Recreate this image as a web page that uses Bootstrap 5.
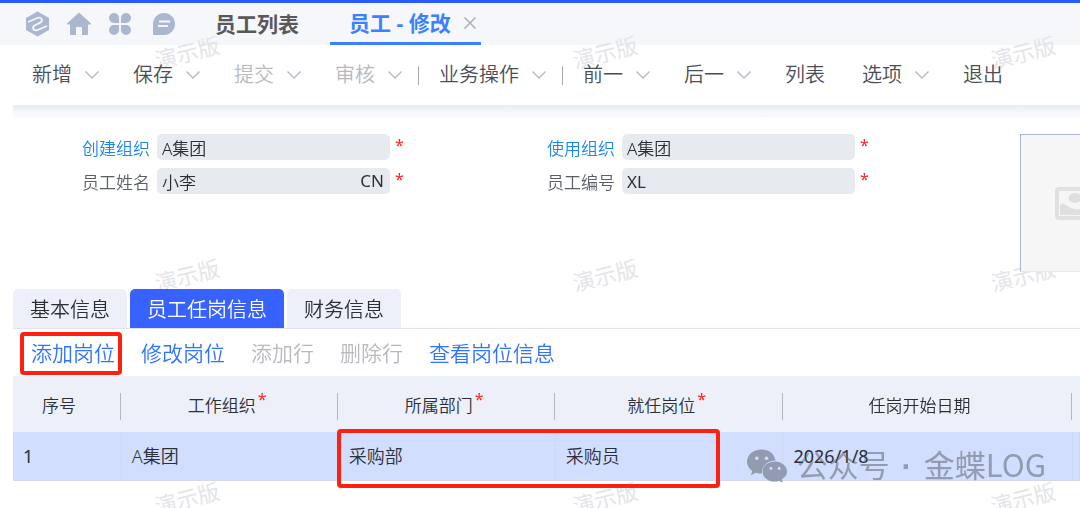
<!DOCTYPE html>
<html lang="zh-CN">
<head>
<meta charset="utf-8">
<meta name="viewport" content="width=device-width, initial-scale=1">
<title>员工 - 修改</title>
<link href="https://cdn.jsdelivr.net/npm/bootstrap@5.3.0/dist/css/bootstrap.min.css" rel="stylesheet">
<style>
  body { font-family: "Noto Sans", "Noto Sans CJK SC", sans-serif; font-weight: 350; color: #2b2f38; background: #fff; }
  .page { min-height: 100vh; }
  button { font-weight: inherit; }
  .layer { position: relative; z-index: 2; }
  .latin { font-weight: 400; }

  .app-bar { border-top: 3px solid #275aff; background: #f5f7fb; height: 45px; padding-left: 25px; }
  .app-icons { gap: 16px; width: 190px; }
  .app-icons button { color: #abb6d0; line-height: 0; }
  .doc-tab { font-size: 21px; line-height: 24px; font-weight: 700; color: #595959; text-decoration: none; }
  .doc-tab.active { color: #3a80ff; }
  .doc-active { border-bottom: 3px solid #3a80ff; padding: 0 4px 0 19px; margin-left: 31px; gap: 12px; }
  .doc-active button { color: #a9afbd; line-height: 0; }

  .stamps { padding: 36px 0 0 154px; display: grid; grid-template-columns: repeat(auto-fill, 418px); grid-auto-rows: 223px; width: 200%; }
  .stamps span { font-size: 22px; line-height: 32px; width: 66px; height: 32px; white-space: nowrap; font-weight: 400; color: #e4e5e9; transform: rotate(-14deg); }
  .stamp-clip { position: absolute; inset: 0; overflow: hidden; z-index: 1; pointer-events: none; }

  .tool-bar { height: 60px; padding-left: 32px; font-size: 20px; }
  .tool-set { gap: 33px; }
  .tool-btn { line-height: 28px; color: #4a4e57; display: flex; align-items: center; gap: 12px; white-space: nowrap; }
  .tool-btn svg { color: #b9bdc9; }
  .tool-btn:disabled { color: #b7b9be; }
  .tool-sep { width: 1px; height: 19px; background: #a5a8b0; margin: 0 20px 0 15px; }
  .bar-shade { height: 13px; margin-left: 13px; background: linear-gradient(#e7ebf4, #f6f8fd 60%, #fafbff); }

  .emp-form { display: grid; grid-template-columns: minmax(0, 465fr) minmax(0, 473fr) minmax(0, 60fr); padding: 16px 0 0 82px; height: 171px; overflow: hidden; }
  .field-col { display: grid; grid-template-columns: minmax(0, 1fr); gap: 8px; align-content: start; padding-right: 145px; }
  .field-col.second { padding-right: 153px; }
  .field-line { display: flex; align-items: center; height: 26px; }
  .field-line label { font-size: 17px; line-height: 24px; width: 75px; flex: none; padding-top: 4px; color: #5a5f6b; }
  .field-line label.linked { color: #1b87f0; }
  .field-box { flex: 1; min-width: 0; display: flex; background: #e7eaef; border-radius: 5px; height: 26px; padding: 0 6px 0 5px; align-items: center; font-size: 17px; line-height: 24px; }
  .field-box input { flex: 1; min-width: 0; border: 0; background: none; padding: 0; height: 26px; font-weight: inherit; color: #2b2f38; outline: 0; }
  .field-box input.latin { font-weight: 400; }
  .req { color: #f22; font-size: 16px; line-height: 20px; font-weight: 400; }
  .field-line .req { width: 12px; padding-left: 5px; flex: none; height: 24px; }
  .photo { width: 110px; height: 138px; background: #f6f6f6; border: 1px solid #abb6d0; border-bottom-color: #e8e8e8; display: flex; align-items: center; justify-content: center; }

  .info-tabs { gap: 3px; margin-left: 13px; border-bottom: 1px solid #e0e4ee; }
  .info-tabs button { font-size: 20px; line-height: 28px; padding: 7px 17px 4px; border-radius: 5px 5px 0 0; background: #edf0f8; color: #2b2f38; }
  .info-tabs button.active { background: #3862ff; color: #fff; }
  .row-tools { gap: 26px; padding-left: 31px; height: 47px; }
  .row-tools button { font-size: 21px; line-height: 30px; color: #2f74ff; white-space: nowrap; position: relative; }
  .row-tools button:disabled { color: #b7b9be; }
  .callout-box { position: absolute; border: 4px solid #ff2010; border-radius: 4px; pointer-events: none; }
  .row-tools .callout-box { inset: -6px -7px -7px -11px; }
  .grid-callout { left: 30.4%; width: 35.9%; top: 53px; height: 59px; }

  .grid-wrap { margin-left: 13px; position: relative; }
  .post-grid { width: 100%; table-layout: fixed; border-collapse: collapse; }
  .post-grid th { height: 56px; background: #edf0f8; font-size: 17px; font-weight: inherit; text-align: center; padding: 4px 16px 0 0; position: relative; white-space: nowrap; }
  .post-grid th::after { content: ""; position: absolute; right: 0; top: 17px; width: 1px; height: 27px; background: #b5b7bd; }
  .post-grid th:last-child::after { display: none; }
  .post-grid th .req { position: absolute; margin: -4px 0 0 2px; }
  .post-grid td { height: 48px; background: #d2deff; border-right: 1px solid #d0d9ec; border-bottom: 1px solid #d5d9e2; padding: 0 0 0 10px; font-size: 18px; line-height: 26px; }
  .account-mark { position: absolute; right: 34px; top: 66px; display: flex; align-items: center; gap: 9px; color: #929bb0; mix-blend-mode: darken; font: 400 31px/44px "Noto Sans CJK SC", sans-serif; white-space: nowrap; pointer-events: none; }
  .mark-dot { display: inline-block; width: 20px; text-align: center; font-family: "Liberation Sans", sans-serif; font-weight: 700; }
</style>
</head>
<body>
<div class="page position-relative overflow-hidden">
  <header class="app-bar d-flex">
    <div class="app-icons d-flex align-items-center flex-shrink-0">
      <button type="button" class="border-0 bg-transparent p-0" aria-label="首页标志"><svg width="25" height="26" viewBox="0 0 25 26"><path fill="currentColor" d="M12.500 .5 24 7v12l-11.500 6.500L1 19V7z"/><path fill="none" stroke="#f5f7fb" stroke-width="1.700" stroke-linejoin="round" d="M3 11 13.500 6.500q3.500 0 3.500 3-.5 2-4.500 3.500T8 16.500q0 3 3.500 3L22 15"/></svg></button>
      <button type="button" class="border-0 bg-transparent p-0" aria-label="主页"><svg width="26" height="24" viewBox="0 0 26 24"><path fill="currentColor" d="M13 .5 25 11.500q.5 1-.8 1H22V22q0 1-1 1h-5v-7q0-1-1-1h-4q-1 0-1 1v7H5q-1 0-1-1v-9.500H1.800q-1.300 0-.8-1z"/></svg></button>
      <button type="button" class="border-0 bg-transparent p-0" aria-label="应用"><svg width="24" height="24" viewBox="0 0 24 24" fill="currentColor"><path d="M11 11H6a5 5 0 1 1 5-5zM13 11V6a5 5 0 1 1 5 5zM11 13v5a5 5 0 1 1-5-5zM13 13h5a5 5 0 1 1-5 5z"/></svg></button>
      <button type="button" class="border-0 bg-transparent p-0 ms-1" aria-label="消息"><svg width="24" height="24" viewBox="0 0 24 24"><path fill="currentColor" d="M12 1a11 11 0 0 1 0 22H2q-1 0-1-1V12A11 11 0 0 1 12 1z"/><path stroke="#f5f7fb" stroke-width="2" d="M7 9.500h11M6 14h10"/></svg></button>
    </div>
    <a href="#" class="doc-tab d-flex align-items-center flex-shrink-0">员工列表</a>
    <div class="doc-active d-flex align-items-center flex-shrink-0">
      <a href="#" class="doc-tab active">员工 - 修改</a>
      <button type="button" class="border-0 bg-transparent p-0" aria-label="关闭"><svg width="14" height="14" viewBox="0 0 14 14"><path stroke="currentColor" stroke-width="1.500" d="M1.500 1.500l11 11M12.500 1.500l-11 11"/></svg></button>
    </div>
  </header>

  <div class="stamp-clip" aria-hidden="true"><div class="stamps">
    <span>演示版</span><span>演示版</span><span>演示版</span><span>演示版</span>
    <span>演示版</span><span>演示版</span><span>演示版</span><span>演示版</span>
    <span>演示版</span><span>演示版</span><span>演示版</span><span>演示版</span>
  </div></div>

  <nav class="tool-bar layer d-flex align-items-center">
    <div class="tool-set d-flex">
      <button type="button" class="tool-btn border-0 bg-transparent p-0">新增<svg width="16" height="10" viewBox="0 0 16 10"><path fill="none" stroke="currentColor" stroke-width="1.500" d="M1.500 1.500 8 8l6.500-6.500"/></svg></button>
      <button type="button" class="tool-btn border-0 bg-transparent p-0">保存<svg width="16" height="10" viewBox="0 0 16 10"><path fill="none" stroke="currentColor" stroke-width="1.500" d="M1.500 1.500 8 8l6.500-6.500"/></svg></button>
      <button type="button" class="tool-btn border-0 bg-transparent p-0" disabled>提交<svg width="16" height="10" viewBox="0 0 16 10"><path fill="none" stroke="currentColor" stroke-width="1.500" d="M1.500 1.500 8 8l6.500-6.500"/></svg></button>
      <button type="button" class="tool-btn border-0 bg-transparent p-0" disabled>审核<svg width="16" height="10" viewBox="0 0 16 10"><path fill="none" stroke="currentColor" stroke-width="1.500" d="M1.500 1.500 8 8l6.500-6.500"/></svg></button>
    </div>
    <span class="tool-sep"></span>
    <button type="button" class="tool-btn border-0 bg-transparent p-0">业务操作<svg width="16" height="10" viewBox="0 0 16 10"><path fill="none" stroke="currentColor" stroke-width="1.500" d="M1.500 1.500 8 8l6.500-6.500"/></svg></button>
    <span class="tool-sep"></span>
    <div class="tool-set d-flex">
      <button type="button" class="tool-btn border-0 bg-transparent p-0">前一<svg width="16" height="10" viewBox="0 0 16 10"><path fill="none" stroke="currentColor" stroke-width="1.500" d="M1.500 1.500 8 8l6.500-6.500"/></svg></button>
      <button type="button" class="tool-btn border-0 bg-transparent p-0">后一<svg width="16" height="10" viewBox="0 0 16 10"><path fill="none" stroke="currentColor" stroke-width="1.500" d="M1.500 1.500 8 8l6.500-6.500"/></svg></button>
      <button type="button" class="tool-btn border-0 bg-transparent p-0 pe-1">列表</button>
      <button type="button" class="tool-btn border-0 bg-transparent p-0">选项<svg width="16" height="10" viewBox="0 0 16 10"><path fill="none" stroke="currentColor" stroke-width="1.500" d="M1.500 1.500 8 8l6.500-6.500"/></svg></button>
      <button type="button" class="tool-btn border-0 bg-transparent p-0">退出</button>
    </div>
  </nav>
  <div class="bar-shade"></div>

  <main class="layer">
    <form class="emp-form">
      <div class="field-col">
        <div class="field-line"><label class="linked" for="f1">创建组织</label><div class="field-box"><input id="f1" value="A集团" readonly></div><span class="req">*</span></div>
        <div class="field-line"><label for="f2">员工姓名</label><div class="field-box"><input id="f2" value="小李" readonly><span class="latin">CN</span></div><span class="req">*</span></div>
      </div>
      <div class="field-col second">
        <div class="field-line"><label class="linked" for="f3">使用组织</label><div class="field-box"><input id="f3" value="A集团" readonly></div><span class="req">*</span></div>
        <div class="field-line"><label for="f4">员工编号</label><div class="field-box"><input id="f4" class="latin" value="XL" readonly></div><span class="req">*</span></div>
      </div>
      <div class="photo"><svg width="40" height="33" viewBox="0 0 40 33"><rect x="2" y="2" width="36" height="29" rx="2" fill="none" stroke="#e1e1e1" stroke-width="4"/><ellipse cx="20" cy="11" rx="6.500" ry="5" fill="#dfdfdf"/><path fill="#dfdfdf" d="M5 28V18q2-3 6 0 5 4 10 4.500 7 0 14-5V28z"/></svg></div>
    </form>

    <div class="info-tabs d-flex" role="tablist">
      <button type="button" role="tab" class="border-0">基本信息</button>
      <button type="button" role="tab" class="border-0 active">员工任岗信息</button>
      <button type="button" role="tab" class="border-0">财务信息</button>
    </div>

    <div class="row-tools d-flex align-items-center">
      <button type="button" class="border-0 bg-transparent p-0">添加岗位<span class="callout-box"></span></button>
      <button type="button" class="border-0 bg-transparent p-0">修改岗位</button>
      <button type="button" class="border-0 bg-transparent p-0" disabled>添加行</button>
      <button type="button" class="border-0 bg-transparent p-0" disabled>删除行</button>
      <button type="button" class="border-0 bg-transparent p-0">查看岗位信息</button>
    </div>

    <div class="grid-wrap">
      <table class="post-grid">
        <colgroup><col style="width:10.15%"><col style="width:20.35%"><col style="width:20.35%"><col style="width:21.35%"><col style="width:27.1%"><col style="width:.7%"></colgroup>
        <thead><tr><th>序号</th><th>工作组织<span class="req">*</span></th><th>所属部门<span class="req">*</span></th><th>就任岗位<span class="req">*</span></th><th>任岗开始日期</th><th class="p-0"></th></tr></thead>
        <tbody><tr><td class="latin">1</td><td>A集团</td><td>采购部</td><td>采购员</td><td class="latin">2026/1/8</td><td class="p-0"></td></tr></tbody>
      </table>
      <div class="callout-box grid-callout"></div>
      <div class="account-mark"><svg width="41" height="34" viewBox="0 0 42 34"><path fill="currentColor" d="M15 0C6.500 0 0 5.500 0 12.500c0 4 2 7.300 5.300 9.600L4 26.500l5-2.600c2 .6 4 .9 6.300.9-.3-8 6-13.500 14-13.500C28 4.500 22.500 0 15 0z"/><path fill="currentColor" d="M28.500 12.500c-7 0-12.500 4.500-12.500 10.300S21.500 33 28.500 33c1.500 0 3-.2 4.300-.6l4 1.600-1.200-3.500c3.200-1.900 5.400-4.700 5.400-7.700 0-5.800-5.500-10.300-12.500-10.300z"/><g fill="#d2deff"><circle cx="10" cy="9" r="1.800"/><circle cx="20" cy="9" r="1.800"/><circle cx="24.500" cy="19.500" r="1.500"/><circle cx="33" cy="19.500" r="1.500"/></g></svg><span>公众号 <span class="mark-dot">·</span> 金蝶LOG</span></div>
    </div>
  </main>
</div>
<script src="https://cdn.jsdelivr.net/npm/bootstrap@5.3.0/dist/js/bootstrap.bundle.min.js"></script>
</body>
</html>
